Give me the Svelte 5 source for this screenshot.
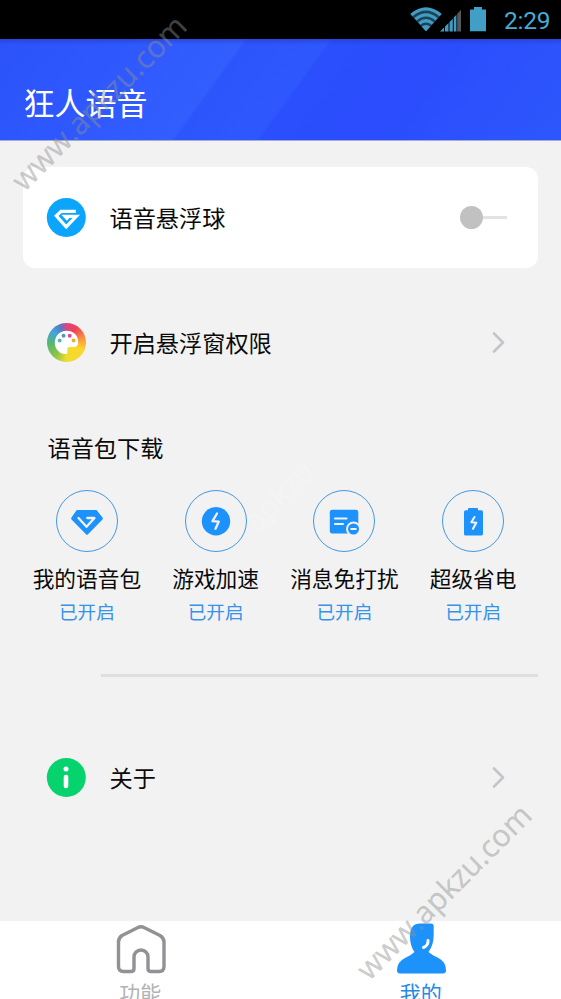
<script>
  const packs = [
    { name: '我的语音包', icon: 'gem' },
    { name: '游戏加速', icon: 'bolt' },
    { name: '消息免打扰', icon: 'message' },
    { name: '超级省电', icon: 'battery' }
  ];
</script>

{#snippet chevron()}
  <svg class="chevron" width="16" height="26" viewBox="0 0 16 26"><path d="M3 3.500l9 9-9 9" fill="none" stroke="#c5c5ca" stroke-width="2.700" stroke-linecap="round" stroke-linejoin="round" /></svg>
{/snippet}

<div class="screen">
  <div class="status">
    <svg width="80" height="26" viewBox="0 0 80 26">
      <path d="M.5 8.500Q16-5 31.500 8.500L16 25.500z" fill="#1b4356" />
      <g fill="none" stroke="#419bc3" stroke-width="3.300">
        <path d="M1.400 9Q16-3.200 30.600 9" />
        <path d="M5.400 13.300Q16 4.500 26.600 13.300" />
        <path d="M9.200 17.500Q16 12 22.800 17.500" />
      </g>
      <path d="M11.600 20.600Q16 17.200 20.400 20.600L16 25.300Z" fill="#419bc3" />
      <path d="M30 25.500l4-4v4zM35 20.500l3.500-3.500v8.500H35zM39.500 16l3.300-3.300v12.800h-3.300zM43.800 11.500l2.600-2.700v16.700h-2.600z" fill="#419bc3" />
      <path d="M47.200 8l3.800-4.300v21.800h-3.800z" fill="#55575a" />
      <path d="M60 3.500h4V1h8v2.500h4v21.800H60z" fill="#419fc6" />
    </svg>
    <span class="time">2:29</span>
  </div>

  <header><h1>狂人语音</h1></header>

  <main>
    <div class="row card">
      <svg width="40" height="40" viewBox="0 0 40 40">
        <circle cx="20.300" cy="19.500" r="19.500" fill="#0ca5fc" />
        <path d="M29.800 13.300H15L10.300 17.800 20.200 28.800 30.300 18.300H19L22 21.600" fill="none" stroke="#fff" stroke-width="3.200" stroke-linejoin="miter" />
      </svg>
      <span class="label">语音悬浮球</span>
      <div class="switch"><i></i></div>
    </div>

    <div class="row permission">
      <div class="palette">
        <svg width="40" height="40" viewBox="0 0 40 40">
          <path d="M20 8C13 8 8 13.500 8 20.500 8 27 13.500 32 19 31.800c2.200-.1 2-2 1.800-4-.2-2.300.6-3.300 2.900-3.300H28c3 0 4-2 4-4.500C32 12.500 27 8 20 8z" fill="#fff" />
          <circle cx="17" cy="13" r="2" fill="#5696bc" /><circle cx="23.300" cy="13" r="2" fill="#e04792" />
          <circle cx="13" cy="18" r="2" fill="#54b9ab" /><circle cx="27.200" cy="18" r="2" fill="#edaa35" />
        </svg>
      </div>
      <span class="label">开启悬浮窗权限</span>
      {@render chevron()}
    </div>

    <h2>语音包下载</h2>
    <div class="packs">
      {#each packs as pack}
        <div class="pack">
          <div class="ring">
            <svg width="36" height="36" viewBox="0 0 36 36">
              {#if pack.icon === 'gem'}
                <path d="M8.500 7h19L33.500 14.500q.8 1 0 2L19 31.300q-1 1-2 0L2.500 16.500q-.8-1 0-2L7 8q.5-1 1.500-1z" fill="#1d92fb" />
                <path d="M9.500 15L17.500 23.800 25.500 15H18.300" fill="none" stroke="#f2f2f2" stroke-width="2.300" stroke-linecap="round" stroke-linejoin="round" />
              {:else if pack.icon === 'bolt'}
                <circle cx="18" cy="18.200" r="14.200" fill="#1d92fb" />
                <path d="M19 10.500l-4.500 7.700 6.200.5L17.500 25.800" fill="none" stroke="#f2f2f2" stroke-width="2.300" stroke-linecap="round" stroke-linejoin="round" />
              {:else if pack.icon === 'message'}
                <rect x="3.800" y="6.800" width="28.500" height="23.700" rx="2.500" fill="#1d92fb" />
                <path d="M9 15.500h11.500M9 21h8" stroke="#f2f2f2" stroke-width="2.200" stroke-linecap="round" />
                <circle cx="27.500" cy="26" r="6.500" fill="#1d92fb" stroke="#f2f2f2" stroke-width="2" />
                <path d="M25.200 26h4.600" stroke="#f2f2f2" stroke-width="2" stroke-linecap="round" />
              {:else}
                <path d="M14 5h8q1 0 1 1v1.200h3.300q1.700 0 1.700 1.700v22q0 1.700-1.700 1.700H10.700Q9 32.600 9 30.900v-22q0-1.700 1.700-1.700H13V6q0-1 1-1z" fill="#1d92fb" />
                <path d="M19.500 14l-3.200 5.200 5 .6-3.300 6" fill="none" stroke="#f2f2f2" stroke-width="2.100" stroke-linecap="round" stroke-linejoin="round" />
              {/if}
            </svg>
          </div>
          <span class="name">{pack.name}</span>
          <span class="state">已开启</span>
        </div>
      {/each}
    </div>

    <div class="divider"></div>

    <div class="row about">
      <svg width="40" height="40" viewBox="0 0 40 40">
        <circle cx="20.300" cy="19.500" r="19.500" fill="#07d36e" />
        <circle cx="20" cy="11" r="2.500" fill="#fff" />
        <path d="M20 19v9" stroke="#fff" stroke-width="4.600" stroke-linecap="round" />
      </svg>
      <span class="label">关于</span>
      {@render chevron()}
    </div>
  </main>

  <nav>
    <div class="tab">
      <svg width="52" height="52" viewBox="0 0 52 52"><path d="M8 15L23.500 7.300q3.500-2 7 0L46 15q4 2.500 4 6.500V46q0 5-5 5H37q-3 0-3-3V36.500a7 7 0 0 0-14 0V48q0 3-3 3H9.500q-5 0-5-5V21.500Q4.500 17.500 8 15z" transform="translate(0 -.5)" fill="none" stroke="#919196" stroke-width="3.400" stroke-linejoin="round" /></svg>
      <span>功能</span>
    </div>
    <div class="tab active">
      <svg width="52" height="52" viewBox="0 0 52 52">
        <path d="M25 2.500h11q2.700 0 2.700 2.700V14q0 10-5.200 17 4 3.500 10 6 7.500 4 7.500 12v.5q0 3-3 3H5q-3 0-3-3V49q0-8 8-12 6-2.500 9.500-6-4.500-6-4.500-15.500Q15 2.500 25 2.500z" fill="#1d92fb" />
        <path d="M33 19.500q.5 5-4.500 7" fill="none" stroke="#fff" stroke-width="3" stroke-linecap="round" />
      </svg>
      <span>我的</span>
    </div>
  </nav>

  <div class="mark top">www.apkzu.com</div>
  <div class="mark middle">apkzu</div>
  <div class="mark bottom">www.apkzu.com</div>
</div>

<style>
  .screen { position: relative; width: 561px; height: 999px; overflow: hidden; display: flex; flex-direction: column; background: #f2f2f2; color: #0a0a0a; font-family: "Noto Sans CJK SC", sans-serif; }
  .status { flex: none; height: 39px; box-sizing: border-box; padding: 6px 11px 0 0; background: #000; display: flex; justify-content: flex-end; gap: 14px; }
  .status svg { flex: none; }
  .time { width: 46px; height: 28px; font: 24.500px/29px Roboto, sans-serif; color: #45acd6; white-space: nowrap; letter-spacing: -.2px; }
  header { flex: none; height: 102px; box-sizing: border-box; padding: 0 23.500px; display: flex; align-items: center; border-bottom: 1px solid #a7abd2;
    background:
      linear-gradient(180deg, #2338bd80 0, #2d55ff00 6px),
      linear-gradient(125.800deg, #2c53fb 0, #2e58fd 100px, #335efe 198px, #2d55fc 201px, #2e58fd 267px, #2b4ffd 270px, #2b4dfd 360px, #2d57fc 100%); }
  h1 { margin: 25px 0 0; font-size: 31px; line-height: 40px; font-weight: 400; color: #fff; }
  main { flex: 1; min-height: 0; padding: 26px 23px 0; display: flex; flex-direction: column; }
  .row { flex: none; height: 101px; box-sizing: border-box; padding: 0 31px 0 23px; display: flex; align-items: center; }
  .row > svg:first-child, .palette { flex: none; width: 40px; height: 40px; }
  .label { flex: 1; margin: -2px 0 0 23.500px; font-size: 23.200px; line-height: 34px; }
  .card { background: #fff; border-radius: 12px; }
  .switch { width: 47px; height: 24px; display: flex; align-items: center; }
  .switch i { width: 23px; height: 23px; border-radius: 50%; background: #c1c1c1; }
  .switch::after { content: ""; flex: 1; height: 3px; background: #e3e3e3; }
  .permission { margin-top: 24px; }
  .palette { display: flex; justify-content: flex-end; }
  .palette svg { display: block; width: 39px; height: 39px; border-radius: 50%; background: conic-gradient(#dc4583 0deg, #ee4359 35deg, #f79440 75deg, #fbd72d 115deg, #eedd2c 180deg, #8bc34b 220deg, #58b86c 265deg, #42a5dc 310deg, #5877c2 340deg, #dc4583 360deg); }
  .chevron { flex: none; }
  h2 { flex: none; margin: 37px 0 0 24.500px; font-size: 23.200px; line-height: 34px; font-weight: 400; }
  .packs { flex: none; margin: 26px .5px 0 -.5px; display: flex; }
  .pack { flex: 1; display: flex; flex-direction: column; align-items: center; white-space: nowrap; }
  .ring { width: 62px; height: 62px; box-sizing: border-box; border: 1.500px solid #4398e7; border-radius: 50%; display: flex; align-items: center; justify-content: center; }
  .name { margin-top: 10px; font-size: 21.700px; line-height: 32px; }
  .state { margin-top: 4px; font-size: 18.600px; line-height: 26px; color: #3693eb; }
  .divider { flex: none; height: 3px; margin: 50px 0 0 78px; background: #dfdfdf; }
  .about { margin-top: 50px; }
  nav { flex: none; height: 78px; display: flex; background: #fff; }
  .tab { flex: 1; display: flex; flex-direction: column; align-items: center; color: #b2b2b4; font-size: 21px; line-height: 30px; }
  .tab svg { flex: none; display: block; overflow: visible; margin-bottom: 4px; }
  .active { color: #2589e5; }
  .mark { position: absolute; font: 30.500px/40px "Open Sans", sans-serif; width: 250px; text-align: center; white-space: nowrap; transform: rotate(-45deg); color: rgba(145, 145, 145, .45); -webkit-text-stroke: .4px rgba(145, 145, 145, .3); pointer-events: none; }
  .top { left: -27px; top: 82px; }
  .middle { left: 153px; top: 475px; color: rgba(255, 255, 255, .2); -webkit-text-stroke: 0; }
  .bottom { left: 318px; top: 871px; }
</style>
